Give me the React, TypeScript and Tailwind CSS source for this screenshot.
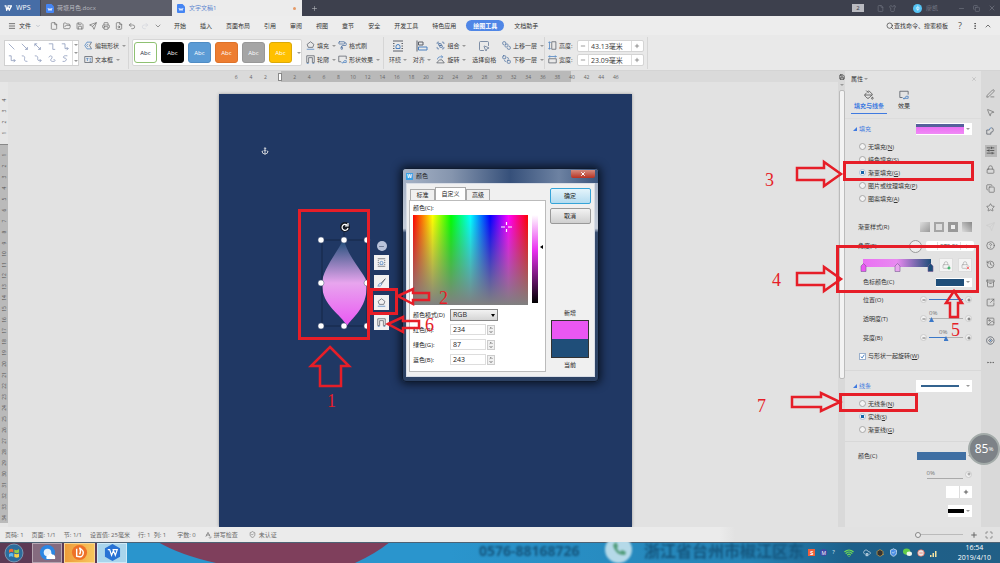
import React from "react";
import {
  Anchor, Archive, BringToFront, ChevronDown, ChevronUp, CircleHelp, CircleMinus, CloudCog, Copy, Ellipsis,
  EllipsisVertical, File, FileSearch, FolderOpen, Group, Hexagon, History, Image, Lock, Maximize, Menu, Minus,
  MousePointer2, PaintBucket, PaintRoller, PenLine, Plus, Printer, Redo2, Save, Search, Send, SendToBack,
  ShieldCheck, Shirt, SlidersHorizontal, SpellCheck, SquareArrowOutUpRight, SquareMousePointer, Star, Undo2,
  Wifi, X,
} from "lucide-react";

type IconProps = { className?: string; strokeWidth?: number };
type Icon = React.ComponentType<IconProps>;

const drawn = (dark: string, blue: string): Icon => {
  const DrawnIcon = ({ className }: IconProps) => (
    <svg viewBox="0 0 24 24" className={className} fill="none" strokeWidth="2">
      <path d={dark} stroke="#5a5f68" />
      <path d={blue} stroke="#4a80c0" />
    </svg>
  );
  return DrawnIcon;
};

const WrapIcon = drawn("M2 2H22M2 7H5M2 12H5M2 17H5M19 7H22M19 12H22M19 17H22M2 22H22", "M8 17V13A4 4 0 0 1 16 13V17Z");
const AlignIcon = drawn("M2 1V23M5 4H14V10H5Z", "M5 14H22V20H5Z");
const FillIcon = drawn("M12 2 21 9 18 17H6L3 9Z", "M2 22H22");
const OutlineIcon = drawn("M2 20V2H22V20H17V7H7V20Z", "M2 23H7M17 23H22");
const EditShapeIcon = drawn("M20 3 15 12 20 21", "M20 3H8L2 12 8 21H20M11 8 7 12 11 16");
const TextBoxIcon = drawn("M2 4H22V20H2Z", "M6 9H12M9 9V16M15 9H19M15 13H19M15 17H19");
const EffectIcon = drawn("M8 18H2V3H22V11", "M9 18 12 22 17 15H22V20H14");
const RotateIcon = drawn("M2 21H22L16 13H9Z", "M4 12C4 5 10 4 17 5M14 1 18 5 14 9");
const HeightIcon = drawn("M10 2H21V22H10Z", "M4 2V22M1 5 4 2 7 5M1 19 4 22 7 19");
const WidthIcon = drawn("M2 10H22V21H2Z", "M2 4H22M5 1 2 4 5 7M19 1 22 4 19 7");
const OverlapIcon = drawn("M14 2A6 6 0 1 1 13 14M9 8H2V19H13V14", "M9 8A6 6 0 0 1 14 2");
const TargetIcon = drawn("M12 2A10 10 0 1 1 11 2ZM12 7 17 12 12 17 7 12Z", "M12 10V14M10 12H14");
const BrushIcon = drawn("M22 2 11 13 13 15 22 2", "M10 14C5 13 6 19 2 21C8 23 13 20 12 16Z");

const menuTabs = ["开始", "插入", "页面布局", "引用", "审阅", "视图", "章节", "安全", "开发工具", "特色应用", "绘图工具", "文档助手"];
const quickIcons: Icon[] = [File, FolderOpen, Save, Send, Printer, FileSearch, Undo2, Redo2, ChevronDown];

const styleSwatches = [
  "bg-white text-gray-800 border-[#8fc172]",
  "bg-black text-white border-black",
  "bg-[#5b9bd5] text-white border-[#4f8cc4]",
  "bg-[#ed7d31] text-white border-[#dd7229]",
  "bg-[#a5a5a5] text-white border-[#989898]",
  "bg-[#ffc000] text-white border-[#dba908]",
];

const linePaths = [
  "M1 1 8 8", "M1 1 8 8M8 5V8H5", "M1 1 8 8M1 4V1H4M8 5V8H5", "M1 1H6V8H9", "M1 1H5V7H9M7 5 9 7 7 9",
  "M1 1H4V7H9M7 5 9 7 7 9", "M1 1C9 1 0 8 8 8", "M1 1C9 1 0 8 9 7M7 5 9 7 7 9", "M1 3C3-1 7 2 4 5S8 9 9 7M7 5 9 7", "M8 1C2 0 2 4 5 4S7 9 2 8",
];

const sideIcons: Icon[] = [
  PenLine, MousePointer2, OverlapIcon, SlidersHorizontal, Lock, Copy, Star, Send,
  CircleHelp, History, Archive, SquareArrowOutUpRight, Image, TargetIcon,
];

const Divider = () => <div className="h-8 w-px shrink-0 bg-[#d6d6d6]" />;

const TitleBar = () => (
  <header className="flex h-4 shrink-0 items-stretch bg-[#3d404d] text-[#b9bac0]">
    <button className="flex w-10 items-center gap-1 bg-[#466da6] pl-1 text-[7px] text-white">
      <svg viewBox="0 0 18 14" className="h-[6px] w-2" fill="none" stroke="white" strokeWidth="3">
        <path d="M1 2H4L6 12 9 5 12 12 17 2H8" />
      </svg>
      WPS
    </button>
    <button className="flex w-[132px] items-center gap-[3px] border-l border-[#444652] bg-[#5c5e6a] pl-[5px] text-left">
      <DocIcon />
      荷塘月色.docx
    </button>
    <button className="flex w-[130px] items-center gap-1 bg-[#ececec] pl-[5px] pr-[6px] text-[#5b86cf]">
      <DocIcon />
      <span>文字文稿1</span>
      <span className="ml-auto size-[3px] rounded-full bg-[#e59a67]" />
    </button>
    <button className="flex w-6 items-center justify-center" aria-label="新建标签"><Plus className="size-[7px]" /></button>
    <div className="ml-auto flex items-center text-[#777a86]">
      <span className="mr-[13px] flex h-2 w-3 items-center justify-center bg-[#b9bac0] text-[#33353f]">2</span>
      <File className="mr-[5px] size-[7px]" />
      <Shirt className="mr-[17px] size-[7px]" />
      <span className="mr-1 flex size-[9px] items-center justify-center rounded-full bg-[#55c4f5] text-[5px] text-white">ф</span>
      <span className="mr-5">廖凯</span>
      <button aria-label="最小化"><Minus className="mr-2 size-[7px]" /></button>
      <button aria-label="还原"><Copy className="mr-2 size-[7px]" /></button>
      <button aria-label="关闭"><X className="mr-1 size-2" /></button>
    </div>
  </header>
);

const DocIcon = () => (
  <svg viewBox="0 0 8 9" className="h-[9px] w-2 shrink-0">
    <path d="M1 0H5.5L8 2.5V8Q8 9 7 9H1Q0 9 0 8V1Q0 0 1 0Z" fill="#4585f3" />
    <path d="M2 4 3 6.5 4 4.5 5 6.5 6 4" fill="none" stroke="white" strokeWidth=".8" />
  </svg>
);

const MenuBar = () => (
  <nav className="flex h-[19px] shrink-0 items-center bg-[#ededed] text-[#333]">
    <Menu className="ml-2 size-2" />
    <button className="ml-[3px]">文件</button>
    <ChevronDown className="ml-1 size-[6px] text-gray-400" />
    <div className="ml-[9px] flex items-center gap-[5px] text-[#666]">
      {quickIcons.map((I, i) => (
        <button key={i} className={i === 7 ? "text-gray-300" : ""}><I className="size-2" strokeWidth={2} /></button>
      ))}
    </div>
    <div className="ml-3 flex items-center gap-[14px]">
      {menuTabs.map((t) => (
        <button
          key={t}
          className={t === "绘图工具" ? "-mx-1 h-[11px] rounded-full bg-[#4f86e6] px-[7px] font-bold text-white" : ""}
        >
          {t}
        </button>
      ))}
    </div>
    <div className="ml-auto flex items-center">
      <Search className="size-2" />
      <span className="mr-[10px]">查找命令、搜索模板</span>
      <button className="text-[9px] text-[#555]">?</button>
      <EllipsisVertical className="ml-[9px] size-2" />
      <ChevronUp className="ml-[5px] mr-2 size-2" />
    </div>
  </nav>
);

const Caret = () => <span className="ml-px size-0 border-x-2 border-t-2 border-x-transparent border-t-[#999]" />;

const RibbonItem = ({ icon: I, label, arrow = true }: { icon: Icon; label: string; arrow?: boolean }) => (
  <button className="flex h-[14px] items-center gap-[2px] whitespace-nowrap">
    <I className="size-[9px] text-[#4b6f9f]" />
    {label}
    {arrow && <Caret />}
  </button>
);

const BigItem = ({ icon: I, label, arrow = true }: { icon: Icon; label: string; arrow?: boolean }) => (
  <button className="flex flex-col items-center whitespace-nowrap">
    <span className="flex h-[14px] items-center"><I className="size-3 text-[#5a6f8f]" strokeWidth={1.5} /></span>
    <span className="flex h-[14px] items-center gap-px">{label}{arrow && <Caret />}</span>
  </button>
);

const SizeField = ({ label, value, icon: I }: { label: string; value: string; icon: Icon }) => (
  <label className="flex h-[14px] items-center">
    <I className="mr-[2px] size-[9px]" />
    <span className="w-[18px]">{label}</span>
    <span className="flex h-3 w-[67px] items-center rounded-xs border border-[#d4d4d4] bg-white">
      <Minus className="mx-[2px] size-[6px]" />
      <input defaultValue={value} className="h-full w-[44px] border-x border-[#ddd] pl-[2px] text-[7px] outline-none" />
      <Plus className="mx-[2px] size-[6px]" />
    </span>
  </label>
);

const Ribbon = () => (
  <section className="flex h-9 shrink-0 items-center border-b border-[#d4d4d4] bg-[#e9e9e9] pl-1 text-[#3a3a3a]">
    <div className="flex h-[26px] w-[75px] border border-[#d0d0d0] bg-white">
      <div className="grid flex-1 grid-cols-5 place-items-center">
        {linePaths.map((d) => (
          <svg key={d} viewBox="0 0 10 10" className="size-2" fill="none" stroke="#8291b5" strokeWidth=".9"><path d={d} /></svg>
        ))}
      </div>
      <div className="flex w-[6px] flex-col items-center justify-around border-l border-[#ddd]"><Caret /><Caret /><Caret /></div>
    </div>
    <div className="flex w-[49px] flex-col pl-[5px]">
      <RibbonItem icon={EditShapeIcon} label="编辑形状" />
      <RibbonItem icon={TextBoxIcon} label="文本框" />
    </div>
    <Divider />
    <div className="ml-[3px] flex h-[27px] w-[170px] items-center gap-1 rounded-xs border border-[#d6d6d6] bg-white pl-px">
      {styleSwatches.map((c) => (
        <button key={c} className={`h-[21px] w-[23px] shrink-0 rounded-[3px] border text-[6px] ${c}`}>Abc</button>
      ))}
      <Caret />
    </div>
    <div className="ml-1 flex w-[32px] flex-col">
      <RibbonItem icon={FillIcon} label="填充" />
      <RibbonItem icon={OutlineIcon} label="轮廓" />
    </div>
    <div className="flex w-[45px] flex-col">
      <RibbonItem icon={PaintRoller} label="格式刷" arrow={false} />
      <RibbonItem icon={EffectIcon} label="形状效果" />
    </div>
    <Divider />
    <div className="ml-[5px] flex w-[155px] justify-between">
      <BigItem icon={WrapIcon} label="环绕" />
      <BigItem icon={AlignIcon} label="对齐" />
      <div className="flex flex-col">
        <RibbonItem icon={Group} label="组合" />
        <RibbonItem icon={RotateIcon} label="旋转" />
      </div>
      <BigItem icon={SquareMousePointer} label="选择窗格" arrow={false} />
      <div className="flex flex-col">
        <RibbonItem icon={BringToFront} label="上移一层" />
        <RibbonItem icon={SendToBack} label="下移一层" />
      </div>
    </div>
    <Divider />
    <div className="ml-[3px] mr-[3px] flex flex-col">
      <SizeField icon={HeightIcon} label="高度:" value="43.13毫米" />
      <SizeField icon={WidthIcon} label="宽度:" value="23.09毫米" />
    </div>
    <Divider />
  </section>
);

const rulerMarks = ["6", "4", "2", "", ...Array.from({ length: 23 }, (_, i) => String((i + 1) * 2))];
const sideMarks = ["4", "3", "2", "1"];

const TopRuler = () => (
  <div className="flex h-[11px] shrink-0 items-center bg-[#dadada] pl-[229px] text-[5px] text-[#666]">
    <div className="flex h-full w-[394px] items-center bg-[linear-gradient(to_right,transparent_52px,#b9b9b9_52px,#b9b9b9_342px,transparent_342px)]">
      {rulerMarks.map((m, i) => (
        <span key={i} className="flex flex-1 justify-center">
          {m || <span className="h-2 w-1 border border-[#888] bg-white" />}
        </span>
      ))}
    </div>
  </div>
);

const RulerCell = ({ mark }: { mark: string }) => (
  <div className="flex h-[11px] shrink-0 items-center justify-center"><span className="-rotate-90">{mark}</span></div>
);

const SideRuler = () => (
  <div className="flex w-2 shrink-0 flex-col overflow-hidden bg-[#e6e6e6] pt-3 text-[5px] text-[#555]">
    {sideMarks.map((m) => <RulerCell key={m} mark={m} />)}
    <div className="mt-[6px] shrink-0 border-t border-[#888] bg-[#bababa] pt-1">
      {Array.from({ length: 34 }, (_, i) => <RulerCell key={i} mark={String(i + 1)} />)}
    </div>
  </div>
);

const floatTools: Icon[] = [WrapIcon, BrushIcon, FillIcon, OutlineIcon];

const Petal = () => (
  <svg viewBox="0 0 56 112" className="absolute left-[98px] top-[126px] h-28 w-14">
    <defs>
      <linearGradient id="petal" x1="0" y1="0" x2="0" y2="1">
        <stop offset="0" stopColor="#1f4e79" />
        <stop offset=".5" stopColor="#e8a5ee" />
        <stop offset="1" stopColor="#ea57f3" />
      </linearGradient>
    </defs>
    <path d="M26 20C20 33 5 50 5 64C5 86 24 94 30 106C34 98 50 90 50 64C50 55 32 40 27 20Z" fill="url(#petal)" />
    <path d="M5 20H50V106H5ZM27 10V20" fill="none" stroke="#152747" strokeWidth="1" />
    {[[4, 20], [27, 20], [50, 20], [4, 63], [50, 63], [4, 106], [27, 106], [50, 106]].map(([x, y]) => (
      <circle key={`${x}-${y}`} cx={x} cy={y} r="3" fill="white" stroke="#4a5878" strokeWidth=".5" />
    ))}
    <circle cx="28" cy="7" r="5" fill="#151a24" />
    <path d="M30 5A3 3 0 1 0 31 8M31 3V6H28" fill="none" stroke="white" strokeWidth="1.2" />
  </svg>
);

const Canvas = () => (
  <div className="flex min-w-0 flex-1 overflow-hidden bg-[#e2e2e2] pl-[211px] pt-3">
    <div className="relative w-[413px] bg-[#203864] shadow-[0_0_3px_#999]">
      <Anchor className="absolute left-[42px] top-[53px] size-2 text-[#c8ccd4]" strokeWidth={3} />
      <Petal />
      <div className="absolute left-[155px] top-[147px] flex w-[15px] flex-col items-center gap-[5px]">
        <button className="-mb-px flex size-[10px] items-center justify-center rounded-full bg-[#b9c3da] text-[#3c4a68]" aria-label="收起">
          <Minus className="size-[7px]" />
        </button>
        {floatTools.map((I, i) => (
          <button key={i} className="flex h-[15px] w-[15px] items-center justify-center bg-[#f1f1f1] text-[#4d5a6b]">
            <I className="size-[9px]" />
          </button>
        ))}
      </div>
    </div>
  </div>
);

const Radio = ({ group, label, hotkey, checked = false }: { group: string; label: string; hotkey: string; checked?: boolean }) => (
  <label className="flex h-[13px] items-center gap-[2px] pl-[14px]">
    <input
      type="radio"
      name={group}
      defaultChecked={checked}
      className="size-[7px] appearance-none rounded-full border border-[#a8a8a8] bg-[#f3f3f3] checked:border-[#aebfd5] checked:bg-[radial-gradient(#1463a8_45%,#f3f3f3_55%)]"
    />
    <span>{label}(<u>{hotkey}</u>)</span>
  </label>
);

const RoundButton = ({ plus = false }: { plus?: boolean }) => (
  <button className="flex size-[7px] shrink-0 items-center justify-center rounded-full border border-[#ccc] bg-[#f2f2f2]" aria-label={plus ? "增加" : "减少"}>
    {plus ? <Plus className="size-1" strokeWidth={4} /> : <Minus className="size-1" strokeWidth={4} />}
  </button>
);

const SliderRow = ({ label, value, text }: { label: string; value: number; text: string }) => (
  <label className="flex h-[19px] items-center pl-[18px] pr-[9px]">
    <span className="mr-auto">{label}</span>
    <RoundButton />
    <span className="relative mx-[2px] flex h-full w-[34px] items-center">
      <span className="absolute left-0 top-0 text-[#777]" style={{ marginLeft: `${value / 5}px` }}>{text}</span>
      <input
        type="range"
        defaultValue={value}
        className="h-px w-full appearance-none [&::-webkit-slider-thumb]:mt-[2px] [&::-webkit-slider-thumb]:size-[5px] [&::-webkit-slider-thumb]:appearance-none [&::-webkit-slider-thumb]:bg-[#3b78c8] [&::-webkit-slider-thumb]:[clip-path:polygon(50%_0,100%_100%,0_100%)]"
        style={{ background: `linear-gradient(to right, #3b78c8 ${value}%, #b0b0b0 ${value}%)` }}
      />
    </span>
    <RoundButton plus />
  </label>
);

const Heading = ({ text, children }: { text: string; children: React.ReactNode }) => (
  <div className="flex h-5 items-center pl-2 pr-[9px]">
    <span className="mr-[2px] size-0 border-b-4 border-l-4 border-b-[#3f7ae0] border-l-transparent" />
    <h3 className="mr-auto text-[#3f7ae0]">{text}</h3>
    <button aria-label={text} className="flex h-3 w-14 items-center justify-between bg-white pr-[2px]">{children}<Caret /></button>
  </div>
);

const GradientStop = ({ color }: { color: string }) => (
  <svg viewBox="0 0 6 9" className="h-[9px] w-[7px]"><path d="M.5 3 3 .5 5.5 3V8.5H.5Z" fill={color} stroke="#7a5a94" strokeWidth=".6" /></svg>
);

const PropertyPanel = () => (
  <aside className="w-[136px] shrink-0 overflow-hidden bg-[#e3e3e3] text-[#333]">
    <div className="flex h-4 items-center pl-[6px] pr-1">
      <span>属性</span><Caret /><X className="ml-auto size-[6px] text-[#aaa]" />
    </div>
    <div className="flex h-[27px] gap-[11px] pl-[6px]">
      <button className="flex w-9 flex-col items-center border-b border-[#3f7ae0] font-bold text-[#3f7ae0]">
        <PaintBucket className="mb-[2px] mt-[3px] size-[10px] text-[#555]" />填充与线条
      </button>
      <button className="flex flex-col items-center">
        <EffectIcon className="mb-[2px] mt-[3px] size-[10px]" />效果
      </button>
    </div>
    <div className="mt-1 border-t border-[#dcdcdc]">
      <Heading text="填充">
        <span className="h-[10px] w-12 bg-[linear-gradient(#55609b_30%,#ea6ff3_32%,#f08af5)]" />
      </Heading>
      <div className="pb-3 pt-px">
        <Radio group="fill" label="无填充" hotkey="N" />
        <Radio group="fill" label="纯色填充" hotkey="S" />
        <Radio group="fill" label="渐变填充" hotkey="G" checked />
        <Radio group="fill" label="图片或纹理填充" hotkey="P" />
        <Radio group="fill" label="图案填充" hotkey="A" />
      </div>
      <div className="flex h-[19px] items-center pl-[13px] pr-[9px]">
        <span className="mr-auto">渐变样式(R)</span>
        <div className="flex gap-1">
          <button aria-label="线性" className="size-[10px] bg-[linear-gradient(135deg,#ddd,#999)]" />
          <button aria-label="射线" className="size-[10px] border-2 border-[#a5a5a5] bg-[#ddd]" />
          <button aria-label="矩形" className="size-[10px] border-[3px] border-[#999] bg-[#eee]" />
          <button aria-label="路径" className="size-[10px] bg-[linear-gradient(45deg,#ddd,#888)]" />
        </div>
      </div>
      <label className="flex h-5 items-center pl-[13px] pr-[7px]">
        <span className="mr-auto">角度(E)</span>
        <span className="mr-1 size-[13px] rounded-full border border-[#999] bg-[#eee]" />
        <span className="flex h-[10px] w-12 items-center rounded-xs bg-white">
          <Minus className="mx-[3px] size-[5px]" />
          <input defaultValue="270.0°" className="w-6 border-x border-[#ddd] pl-[2px] outline-none" />
          <Plus className="mx-[3px] size-[5px]" />
        </span>
      </label>
      <div className="flex h-[18px] items-center justify-between pl-[15px] pr-[9px]">
        <div className="flex h-[13px] w-[74px] items-end justify-between bg-[linear-gradient(to_right,#ea6ff3,#e88af0_50%,#1f4e79)] bg-[length:68px_8px] bg-[position:3px_0] bg-no-repeat">
          <GradientStop color="#ea57f3" /><GradientStop color="#e8a5ee" /><GradientStop color="#1f4e79" />
        </div>
        <button className="relative flex size-[14px] items-center justify-center border border-[#ddd] bg-[#f4f4f4]" aria-label="增加光圈">
          <Lock className="size-2 text-[#aaa]" /><Plus className="absolute bottom-px right-px size-1 text-green-600" strokeWidth={5} />
        </button>
        <button className="relative flex size-[14px] items-center justify-center border border-[#ddd] bg-[#f4f4f4]" aria-label="删除光圈">
          <Lock className="size-2 text-[#aaa]" /><X className="absolute bottom-px right-px size-1 text-red-400" strokeWidth={5} />
        </button>
      </div>
      <div className="flex h-4 items-center pl-[18px] pr-[9px]">
        <span className="mr-auto">色标颜色(C)</span>
        <button className="flex h-[9px] w-9 items-center justify-between bg-white pr-[2px]" aria-label="色标颜色">
          <span className="h-[7px] w-7 bg-[#1f4e79]" /><Caret />
        </button>
      </div>
      <SliderRow label="位置(O)" value={100} text="" />
      <SliderRow label="透明度(T)" value={0} text="0%" />
      <SliderRow label="亮度(B)" value={50} text="0%" />
      <label className="flex h-[18px] items-center gap-[2px] pl-[14px]">
        <input type="checkbox" defaultChecked className="peer sr-only" />
        <svg viewBox="0 0 7 7" className="size-[7px] border border-[#9bb0cc] bg-white"><path d="M1 3.5 3 5.5 6 1" fill="none" stroke="#2b6cb8" strokeWidth="1.2" /></svg>
        <span>与形状一起旋转(<u>W</u>)</span>
      </label>
    </div>
    <div className="mt-[5px] border-t border-[#d8d8d8] pt-[5px]">
      <Heading text="线条"><span className="ml-[5px] h-[2px] w-[38px] bg-[#33638f]" /></Heading>
      <div className="pb-[5px] pt-px">
        <Radio group="line" label="无线条" hotkey="N" />
        <Radio group="line" label="实线" hotkey="S" checked />
        <Radio group="line" label="渐变线" hotkey="G" />
      </div>
    </div>
    <div className="border-t border-[#d8d8d8] pt-1">
      <div className="flex h-5 items-center pl-[13px] pr-[9px]">
        <span className="mr-auto">颜色(C)</span>
        <button className="flex h-[9px] w-[55px] items-center justify-between" aria-label="线条颜色">
          <span className="h-2 w-[49px] bg-[#3f6fa3]" /><Caret />
        </button>
      </div>
      <div className="flex h-4 items-center justify-end gap-[2px] pr-[9px] text-[#777]">
        <span className="border-b border-[#aaa] pr-7 leading-[9px]">0%</span><RoundButton plus />
      </div>
      <div className="flex h-5 items-center justify-end pr-[9px]">
        <button className="flex h-3 w-[26px] items-center justify-between bg-white pr-[3px]" aria-label="增加宽度">
          <span className="ml-auto mr-[3px] h-full w-px bg-[#ddd]" /><Plus className="size-[6px]" strokeWidth={3} />
        </button>
      </div>
      <div className="flex h-[18px] items-center justify-end pr-[9px]">
        <button className="flex h-3 w-6 items-center justify-between bg-white pr-[2px]" aria-label="短划线类型"><span className="h-1 w-4 bg-black" /><Caret /></button>
      </div>
    </div>
  </aside>
);

const SideBar = () => (
  <aside className="flex w-[19px] shrink-0 flex-col items-center bg-[#d9d9d9] pt-[13px] text-[#666]">
    {sideIcons.map((I, i) => (
      <button key={i} className={`flex h-[19px] w-full items-center justify-center ${i === 7 ? "text-[#ccc]" : ""}`}>
        <span className={`flex size-3 items-center justify-center ${i === 3 ? "bg-[#b8b8b8] text-[#333]" : ""}`}><I className="size-[9px]" strokeWidth={1.8} /></span>
      </button>
    ))}
    <Ellipsis className="mt-2 size-[9px]" />
  </aside>
);

const StatusBar = () => (
  <footer className="flex h-[15px] shrink-0 items-center bg-[linear-gradient(to_right,#ebebeb_720px,#e2e2e2_735px)] pl-[5px] text-[#666]">
    <div className="flex items-center gap-2">
      <span>页码: 1</span>
      <span>页面: 1/1</span>
      <span>节: 1/1</span>
      <span>设置值: 25毫米</span>
      <span>行: 1&nbsp; 列: 1</span>
      <span className="ml-[3px]">字数: 0</span>
      <span className="flex items-center gap-[2px]"><SpellCheck className="size-2" />拼写检查</span>
      <span className="ml-[3px] flex items-center gap-[3px]"><ShieldCheck className="size-[7px]" />未认证</span>
    </div>
    <div className="ml-auto flex items-center pr-[7px]">
      <input type="range" aria-label="缩放" defaultValue={0} className="mr-[7px] h-px w-12 appearance-none bg-[#bbb] [&::-webkit-slider-thumb]:size-[6px] [&::-webkit-slider-thumb]:appearance-none [&::-webkit-slider-thumb]:rounded-full [&::-webkit-slider-thumb]:border [&::-webkit-slider-thumb]:border-[#888] [&::-webkit-slider-thumb]:bg-[#eee]" />
      <Plus className="mr-[7px] size-2" strokeWidth={3} /><Maximize className="size-2" />
    </div>
  </footer>
);

const TaskBar = () => (
  <footer className="relative flex h-[21px] shrink-0 items-center overflow-hidden bg-[#2590c8] text-white">
    <svg viewBox="0 0 1000 21" preserveAspectRatio="none" className="absolute inset-0 h-full w-full">
      <defs>
        <linearGradient id="bar"><stop offset=".45" stopColor="#2a95cd" /><stop offset=".75" stopColor="#2583b5" /><stop offset=".85" stopColor="#1c5f8a" /><stop offset="1" stopColor="#215f86" /></linearGradient>
      </defs>
      <path d="M0 0H1000V21H0Z" fill="url(#bar)" />
      <path d="M0 0H126V21H0Z" fill="#5c3a55" />
      <path d="M158 0H390Q375 12 355 21H216Q180 13 158 0Z" fill="#7f3f5c" />
      <path d="M0 .5H1000" stroke="#4d6274" strokeWidth="1" />
    </svg>
    <div className="relative flex items-center gap-[2px] pl-1">
      <button aria-label="开始" className="mr-[6px]">
        <svg viewBox="0 0 20 20" className="size-5">
          <circle cx="10" cy="10" r="9" fill="#2d6c9c" stroke="#8fb4cb" strokeWidth=".7" />
          <path d="M5 7Q7 5 9.300 6.500V9.500Q7 8 5 10Z" fill="#ef6a34" /><path d="M10.300 6.500Q13 8 15 6V9.500Q13 11 10.300 9.500Z" fill="#93cc48" />
          <path d="M5 11Q7 9.500 9.300 10.500V14Q7 12.500 5 14Z" fill="#5fb9f2" /><path d="M10.300 10.500Q13 12 15 10.500V14Q13 15.500 10.300 14Z" fill="#fcd045" />
        </svg>
      </button>
      <button aria-label="QQ浏览器" className="flex h-5 w-[30px] items-center justify-center border border-white/40 bg-white/25">
        <svg viewBox="0 0 18 18" className="size-[17px]">
          <circle cx="9" cy="9" r="8" fill="#2b86e3" /><circle cx="9" cy="9" r="4" fill="#e8f1fa" />
          <path d="M8 16Q7 12 10 12Q12 8 14 11Q18 11 17 16Z" fill="white" />
        </svg>
      </button>
      <button aria-label="阅读" className="flex h-5 w-[31px] items-center justify-center border border-[#f9d695] bg-[linear-gradient(to_right,#ee9d3a,#f8c65d)]">
        <svg viewBox="0 0 18 18" className="size-[17px]"><circle cx="9" cy="9" r="8" fill="#ee7128" /><path d="M6 5V13Q13 15 13 9Q13 7 9 4Q11 8 9 11" fill="none" stroke="white" strokeWidth="1.500" /></svg>
      </button>
      <button aria-label="WPS" className="flex h-5 w-[30px] items-center justify-center border border-[#cdeaf8] bg-[#a9d5ec]">
        <svg viewBox="0 0 18 18" className="size-[17px]"><path d="M9 0 17 4.500V13.500L9 18 1 13.500V4.500Z" fill="#2872d4" /><path d="M4 6H6L8 12 10 7 12 12 14 6H9" fill="none" stroke="white" strokeWidth="1.300" /></svg>
      </button>
    </div>
    <div className="relative ml-auto flex h-full w-[524px] shrink-0 items-start whitespace-nowrap text-[#15567e]">
      <span className="ml-[3px] w-[126px] text-[14px] font-bold leading-[17px] blur-[1px]">0576-88168726</span>
      <span className="-mt-[6px] flex size-[27px] shrink-0 items-center justify-center rounded-full bg-[#b5d9e8] blur-[1px]">
        <svg viewBox="0 0 20 20" className="size-5"><path d="M4 5Q6 15 16 15L17 12 13 10 11 12Q8 10 8 8L9 6 7 2Z" fill="#4e9a76" /></svg>
      </span>
      <span className="ml-3 text-[16px] font-bold leading-[18px] blur-[1px]">浙江省台州市椒江区东</span>
    </div>
    <div className="absolute right-[9px] top-0 flex h-full items-center gap-[5px] text-[#dce9f2]">
      <span className="flex size-[7px] items-center justify-center bg-[#f0603c] font-bold text-white">S</span>
      <span className="flex size-[7px] items-center justify-center rounded-full bg-[#4147a6] text-[5px] text-white">M</span>
      <span className="leading-[7px]">?</span>
      <Wifi className="ml-1 size-[10px] text-[#6fdc55]" strokeWidth={3} />
      <CloudCog className="ml-1 size-2" />
      <Hexagon className="size-2 fill-[#333] text-[#d9a94d]" />
      <ShieldCheck className="size-[9px] fill-[#4b8ee6]" />
      <svg viewBox="0 0 10 10" className="size-[9px]"><ellipse cx="4" cy="4" rx="4" ry="3.500" fill="#62cc48" /><ellipse cx="7" cy="6.500" rx="3" ry="2.500" fill="#eef7ec" /></svg>
      <CircleMinus className="size-2 fill-[#e8e8e8] text-[#e85c4a]" />
      <svg viewBox="0 0 8 8" className="size-2"><path d="M0 8V6H1.500V8M2.500 8V4H4V8M5 8V2H6.500V8" fill="#f3e2a0" /></svg>
      <time className="ml-[15px] text-center text-[7px] leading-[10px] text-white">16:54<br />2019/4/10</time>
    </div>
  </footer>
);

const ColorField = ({ label, value }: { label: string; value: string }) => (
  <label className="flex h-[15px] items-center">
    <span className="w-[37px]">{label}</span>
    <input defaultValue={value} className="h-[11px] w-9 border border-[#ddd] pl-[2px] text-[7px] outline-none" />
    <span className="ml-px flex h-[10px] w-2 flex-col items-center justify-around border border-[#ccc] bg-[#f0f0f0]">
      <ChevronUp className="size-1" strokeWidth={4} /><ChevronDown className="size-1" strokeWidth={4} />
    </span>
  </label>
);

const ColorDialog = () => (
  <div role="dialog" aria-label="颜色" className="absolute left-[402px] top-[168px] w-[197px] rounded-[4px] border border-[#0f1b30] bg-[linear-gradient(#9eabc1,#c5cdd9_28%,#354a6c_30%,#2c4163)] px-[3px] pb-1 text-[#222] shadow-[0_0_8px_2px_#0b1526]">
    <div className="-mx-[3px] flex h-[14px] items-center rounded-t-[3px] bg-[linear-gradient(to_right,#a7b3c6,#8595ae_25%,#36507a_55%,#6d82a2_80%,#3a547c)] pl-[3px] pr-[3px]">
      <span className="mr-[3px] flex size-[7px] items-center justify-center bg-[#3ba0e6] text-[5px] font-bold text-white">W</span>
      <span>颜色</span>
      <button aria-label="关闭" className="mb-[5px] ml-auto flex h-2 w-6 items-center justify-center rounded-b-xs bg-[linear-gradient(#d58c7f,#b73222)] text-white"><X className="size-[6px]" strokeWidth={4} /></button>
    </div>
    <div className="flex border border-[#d8dde6] bg-[#f0f0f0] pb-1 pl-[2px]">
      <div className="w-[137px]">
        <div className="flex items-end pl-px pt-[3px]" role="tablist">
          <button role="tab" className="h-[11px] w-[25px] border border-b-0 border-[#aaa]">标准</button>
          <button role="tab" className="h-[13px] w-[31px] border border-b-0 border-[#aaa] bg-white">自定义</button>
          <button role="tab" className="h-[11px] w-6 border border-b-0 border-[#aaa]">高级</button>
        </div>
        <div className="border border-[#bbb] bg-white pb-1 pl-[3px]">
          <p className="flex h-[14px] items-center">颜色(C):</p>
          <div className="flex">
            <div className="h-[90px] w-[115px] bg-[linear-gradient(transparent,#808080),linear-gradient(to_right,#f00,#ff0_17%,#0f0_33%,#0ff_50%,#00f_67%,#f0f_83%,#f00)]">
              <svg viewBox="0 0 115 90" className="h-[90px] w-[115px]" fill="none" stroke="white" strokeWidth="1.200"><path d="M88 12H92M95 12H99M93.500 7V10M93.500 14V17" /></svg>
            </div>
            <div className="ml-1 h-[88px] w-[6px] bg-[linear-gradient(#fff,#ea30f0_40%,#000)]" />
            <span className="ml-[2px] mt-[30px] size-0 border-y-2 border-r-[3px] border-y-transparent border-r-black" />
          </div>
          <label className="mt-[2px] flex h-[15px] items-center">
            <span className="w-[37px] whitespace-nowrap">颜色模式(D)</span>
            <span className="relative flex">
              <select className="h-3 w-12 appearance-none border border-[#888] bg-[linear-gradient(#f2f2f2,#d5d5d5)] pl-[2px] text-[7px]"><option>RGB</option></select>
              <span className="pointer-events-none absolute right-[3px] top-[5px] size-0 border-x-2 border-t-[3px] border-x-transparent border-t-black" />
            </span>
          </label>
          <ColorField label="红色(R):" value="234" />
          <ColorField label="绿色(G):" value="87" />
          <ColorField label="蓝色(B):" value="243" />
        </div>
      </div>
      <div className="flex flex-1 flex-col items-center pt-1">
        <button className="h-4 w-[41px] rounded-xs border border-[#35a4d8] bg-[linear-gradient(#e4f4fb,#b4dcf0)]">确定</button>
        <button className="mt-1 h-4 w-[41px] rounded-xs border border-[#999] bg-[linear-gradient(#f2f2f2,#cfcfcf)]">取消</button>
        <span className="mt-auto flex h-[14px] items-center">新增</span>
        <div className="w-[38px] border border-[#333]"><div className="h-[18px] bg-[#ea57f3]" /><div className="h-[18px] bg-[#1f4e79]" /></div>
        <span className="flex h-[14px] items-center">当前</span>
      </div>
    </div>
  </div>
);

const Arrow = ({ d, className }: { d: string; className: string }) => (
  <svg className={`absolute overflow-visible ${className}`} fill="none" stroke="#e61e28" strokeWidth="2.500"><path d={d} /></svg>
);

const RIGHT = "M0 7H27V1L44 13 27 25V19H0Z";
const LEFT = "M0 8 15 1V5H31V12H15V16Z";

const Annotations = () => (
  <div className="pointer-events-none font-['Liberation_Serif',serif] text-[18px] leading-[18px] text-[#e61e28]">
    <div className="absolute left-[298px] top-[209px] h-[131px] w-[72px] border-[3px] border-[#e61e28]" />
    <div className="absolute left-[370px] top-[288px] h-[27px] w-[28px] border-[3px] border-[#e61e28]" />
    <div className="absolute right-[26px] top-[161px] h-[20px] w-[131px] border-[3px] border-[#e61e28]" />
    <div className="absolute right-[21px] top-[245px] h-[48px] w-[143px] border-[3px] border-[#e61e28]" />
    <div className="absolute right-[82px] top-[393px] h-[19px] w-[79px] border-[3px] border-[#e61e28]" />
    <Arrow className="left-[310px] top-[346px] h-[42px] w-10" d="M20 1 39 20H31V40H10V20H1Z" />
    <Arrow className="left-[398px] top-[288px] h-[17px] w-8" d={LEFT} />
    <Arrow className="left-[388px] top-[316px] h-[17px] w-8" d={LEFT} />
    <Arrow className="right-[159px] top-[161px] h-[26px] w-11" d={RIGHT} />
    <Arrow className="right-[159px] top-[266px] h-[26px] w-11" d={RIGHT} />
    <Arrow className="right-[158px] top-[392px] h-[20px] w-[50px]" d="M0 5H29V1L48 10 29 19V15H0Z" />
    <Arrow className="right-[37px] top-[290px] h-7 w-[18px]" d="M9 1 17 13H13V27H5V13H1Z" />
    <span className="absolute left-[327px] top-[392px]">1</span>
    <span className="absolute left-[439px] top-[289px]">2</span>
    <span className="absolute left-[425px] top-[316px]">6</span>
    <span className="absolute right-[226px] top-[171px]">3</span>
    <span className="absolute right-[219px] top-[271px]">4</span>
    <span className="absolute right-[40px] top-[321px]">5</span>
    <span className="absolute right-[234px] top-[397px]">7</span>
  </div>
);

const App = () => (
  <div className="relative flex h-screen flex-col overflow-hidden bg-[#e2e2e2] font-['Open_Sans','Noto_Sans_CJK_SC',sans-serif] text-[6px] leading-[8px]">
    <TitleBar />
    <MenuBar />
    <Ribbon />
    <main className="flex min-h-0 flex-1">
      <div className="flex min-w-0 flex-1 flex-col">
        <TopRuler />
        <div className="flex min-h-0 flex-1">
          <SideRuler />
          <Canvas />
        </div>
      </div>
      <div className="flex w-[7px] shrink-0 flex-col items-center gap-1 bg-[#d9d9d9] pt-[3px]">
        <Save className="size-[6px]" />
        <Caret />
        <div className="h-[289px] w-[6px] rounded-xs border border-[#bbb] bg-[#f3f3f3]" />
      </div>
      <PropertyPanel />
      <SideBar />
    </main>
    <StatusBar />
    <TaskBar />
    <ColorDialog />
    <Annotations />
    <div className="absolute right-0 top-[433px] flex size-8 items-center justify-center rounded-full border-2 border-[#a3aba9] bg-[#7d8287] text-[12px] text-white">
      85<span className="text-[6px]">%</span>
    </div>
  </div>
);

export default App;
